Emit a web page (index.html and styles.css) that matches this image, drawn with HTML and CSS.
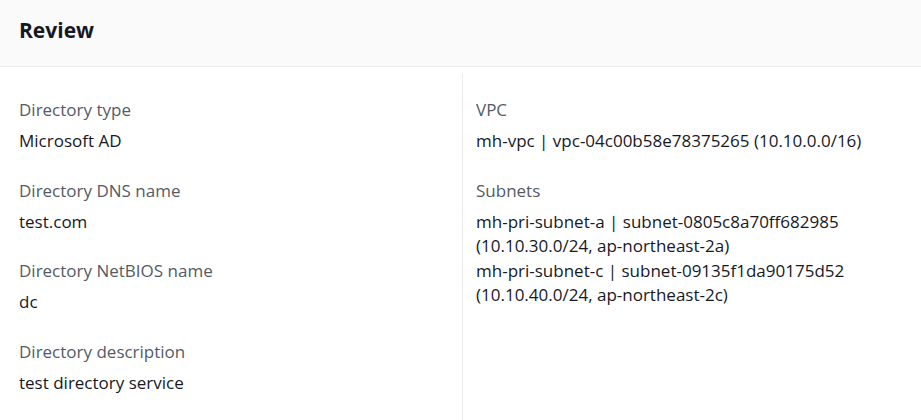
FILE: index.html
```html
<!DOCTYPE html>
<html>
<head>
<meta charset="utf-8">
<link rel="stylesheet" href="styles.css">
</head>
<body>
<div class="container">
  <div class="header"><h2 class="title">Review</h2></div>
  <div class="body">
    <div class="col">
      <div class="field">
        <div class="label">Directory type</div>
        <div class="value">Microsoft AD</div>
      </div>
      <div class="field">
        <div class="label">Directory DNS name</div>
        <div class="value">test.com</div>
      </div>
      <div class="field">
        <div class="label">Directory NetBIOS name</div>
        <div class="value">dc</div>
      </div>
      <div class="field">
        <div class="label">Directory description</div>
        <div class="value">test directory service</div>
      </div>
    </div>
    <div class="col col-right">
      <div class="field">
        <div class="label">VPC</div>
        <div class="value">mh-vpc | vpc-04c00b58e78375265 (10.10.0.0/16)</div>
      </div>
      <div class="field">
        <div class="label">Subnets</div>
        <div class="value">mh-pri-subnet-a | subnet-0805c8a70ff682985<br>(10.10.30.0/24, ap-northeast-2a)</div>
        <div class="value">mh-pri-subnet-c | subnet-09135f1da90175d52<br>(10.10.40.0/24, ap-northeast-2c)</div>
      </div>
    </div>
  </div>
</div>
</body>
</html>
```

FILE: styles.css
```css
html, body {
  margin: 0;
  padding: 0;
  background: #ffffff;
}
body {
  font-family: "Open Sans", "Noto Sans", Arial, sans-serif;
  color: #16191f;
  font-size: 17px;
  width: 921px;
  height: 420px;
  overflow: hidden;
}
.container {
  display: flex;
  flex-direction: column;
}
.header {
  background: #fafafa;
  border-bottom: 1px solid #eaeded;
  height: 67px;
  box-sizing: border-box;
  padding: 0 19px;
  display: flex;
  align-items: center;
}
.title {
  margin: 0;
  font-size: 21px;
  font-weight: 700;
  color: #16191f;
  line-height: 28px;
  margin-top: -6px;
}
.body {
  display: grid;
  grid-template-columns: 462px 1fr;
  padding-top: 6px;
}
.col {
  box-sizing: border-box;
  padding: 25px 19px 0 19px;
  display: flex;
  flex-direction: column;
  gap: 25px;
  height: 347px;
}
.col-right {
  border-left: 1px solid #eaeded;
  padding-left: 13px;
}
.field {
  display: flex;
  flex-direction: column;
}
.label {
  color: #545b64;
  line-height: 24px;
  margin-bottom: 7px;
}
.value {
  line-height: 24.5px;
  color: #16191f;
}
```
